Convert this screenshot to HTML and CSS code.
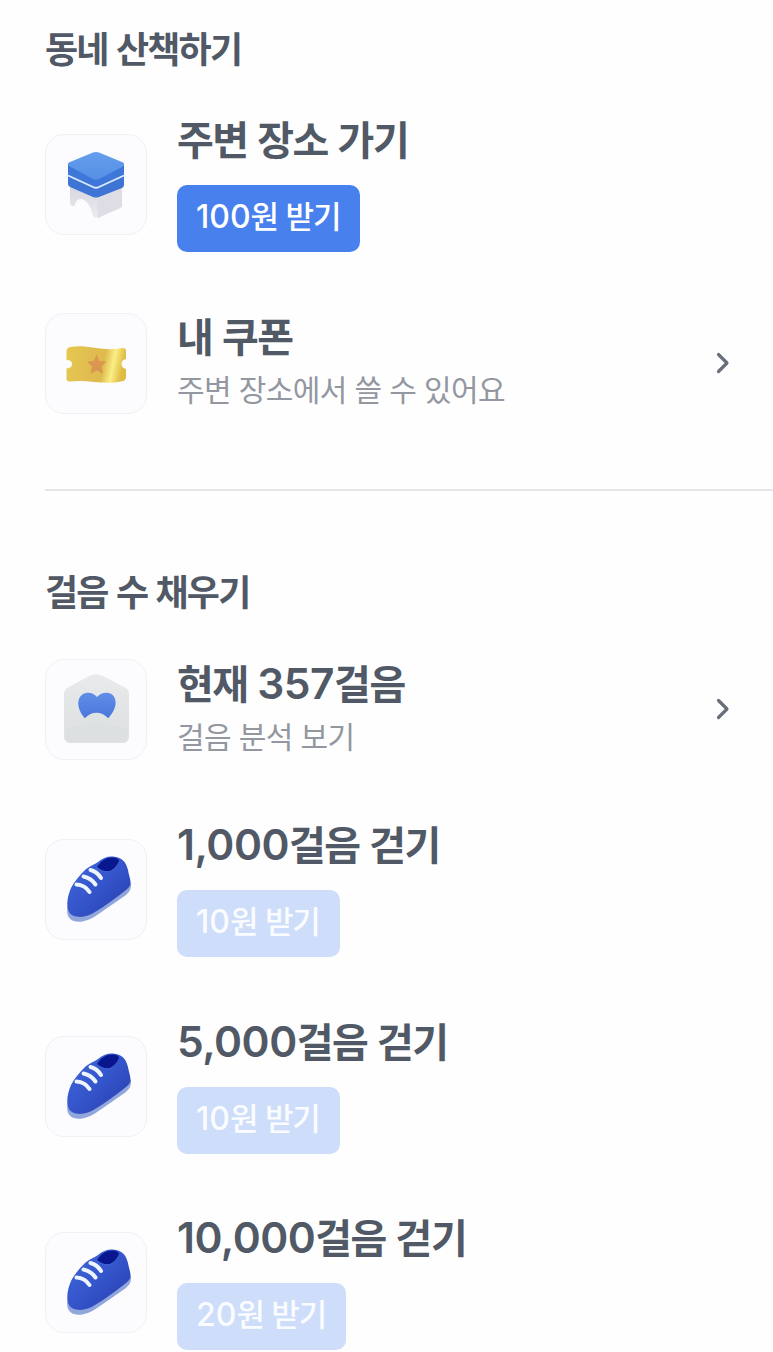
FILE: index.html
```html
<!DOCTYPE html>
<html lang="ko">
<head>
<meta charset="utf-8">
<title>동네 산책하기</title>
<link rel="stylesheet" href="styles.css">
</head>
<body>
<svg class="defs" width="0" height="0" aria-hidden="true">
  <defs>
    <linearGradient id="cushion" x1="0" y1="0" x2="0" y2="1"><stop offset="0" stop-color="#659eeb"/><stop offset="1" stop-color="#5690e6"/></linearGradient>
    <linearGradient id="legs" x1="0" y1="0" x2="0" y2="1"><stop offset="0" stop-color="#d5d4dd"/><stop offset="1" stop-color="#ebebef"/></linearGradient>
    <linearGradient id="gold" x1="0" y1="0" x2="1" y2="0.12"><stop offset="0" stop-color="#e5c84f"/><stop offset=".45" stop-color="#e1bd51"/><stop offset=".67" stop-color="#dfba4c"/><stop offset=".83" stop-color="#faee85"/><stop offset="1" stop-color="#dfbc44"/></linearGradient>
    <linearGradient id="paper" x1="0" y1="0" x2="0" y2="1"><stop offset="0" stop-color="#e8eaeb"/><stop offset="1" stop-color="#dcdfe0"/></linearGradient>
    <linearGradient id="heart" x1="0" y1="0" x2="0" y2="1"><stop offset="0" stop-color="#618ce8"/><stop offset="1" stop-color="#4a79dc"/></linearGradient>
    <linearGradient id="leather" x1="0" y1="0" x2="1" y2="1"><stop offset="0" stop-color="#4169dc"/><stop offset=".5" stop-color="#3555cb"/><stop offset="1" stop-color="#263ba9"/></linearGradient>
    <symbol id="shoe" viewBox="0 0 120 120">
      <path d="M31.500 76C30 86 33 91 42 91.800C50 92 57 88 64 83L90 65Q96 60 95 53Z" fill="#91a7dc"/>
      <path d="M48 41C53 36 58 35 62 32C66 28 72 26 77 26.500C86 27 90 32 92 40C93 46 95 50 94.500 54Q94 57 90 60C80 68 69 76 59 82C51 88 37 89 33 82C29.500 75 32 65 35 58C38 52 43 46 48 41Z" fill="url(#leather)"/>
      <path d="M61 37C64 32 69 27.500 76 27.500Q83 27.500 83.500 32C82 35 79 38 75 41Q69 43 61 37Z" fill="#08178d"/>
      <path d="M60 37.500Q67 43 74 41.500C79 39 82 35 83.500 31" fill="none" stroke="#4164d5" stroke-width="1"/>
      <g fill="none" stroke="#edf5ff" stroke-width="4" stroke-linecap="round"><path d="M54.500 40Q61 41.500 65 48"/><path d="M47.500 46.500Q55 48 59.500 54.500"/><path d="M40.500 54.500Q49 55 53.500 62"/></g>
    </symbol>
  </defs>
</svg>
<main class="page">
  <section class="section">
    <h2 class="heading">동네 산책하기</h2>
    <div class="list">
      <article class="row reward">
        <div class="tile"><svg viewBox="0 0 120 120">
          <path d="M34 58H86V80Q86 82 84 83L64 92Q58 94 57 91L54.500 83Q51 75 45 74Q40 74 38.500 81L36 81Q34 80 34 77Z" fill="url(#legs)"/>
          <path d="M61 69L86 60V80Q86 82 84 83L62 93Z" fill="#dedde5"/>
          <path d="M32 46H88V60Q88 62 86 63L63 72Q60 73 57 72L34 62Q32 61 32 59Z" fill="#3e75d5"/>
          <path d="M32 40Q32 38 34 37H86Q88 38 88 41V48Q88 50 86 51L63 61Q60 62 57 61L34 52Q32 51 32 48Z" fill="#3e77da"/>
          <path d="M32 50.500L57 62Q60 63.500 63 62L88 50.500" fill="none" stroke="#deedff" stroke-width="1.800"/>
          <path d="M33 41Q31 38 34 37L57 27.500Q60 26.500 63 27.500L86 37Q90 39 86 42L64 53.500Q60 55.500 56 53.500Z" fill="url(#cushion)"/>
        </svg></div>
        <div class="copy"><h3 class="title">주변 장소 가기</h3><button class="button"><span class="num">100</span>원 받기</button></div>
      </article>
      <article class="row link">
        <div class="tile"><svg viewBox="0 0 120 120">
          <path d="M30.500 47Q30.500 44 34 43C53 40 66 48 86 44Q90 43.500 90 47V55Q85.500 56 85.500 60Q85.500 64 90 65V73Q90 76 87 77C69 82 53 75 34 77.500Q30.500 77.500 30.500 75V64.500Q36 64 36 60Q36 56 30.500 56Z" fill="url(#gold)"/>
          <path d="M60.500 51.500L63 57.500L69.500 58L64.800 62.500L66.500 69L61 66L55 69L56.500 62.500L52 58L58.200 57.500Z" fill="#db9651" stroke="#db9651" stroke-width="1" stroke-linejoin="round"/>
        </svg></div>
        <div class="copy"><h3 class="title">내 쿠폰</h3><p class="sub">주변 장소에서 쓸 수 있어요</p></div>
        <svg class="chevron" viewBox="0 0 16 24"><path d="M3.500 3.500L12 12L3.500 20.500"/></svg>
      </article>
    </div>
  </section>
  <section class="section divided">
    <h2 class="heading">걸음 수 채우기</h2>
    <div class="list">
      <article class="row link">
        <div class="tile"><svg viewBox="0 0 120 120">
          <path d="M28 43Q28 40 31 38L54 25.500Q60 22.500 66 25.500L90 38Q93 40 93 43V85Q93 93 86 93H35Q28 93 28 85Z" fill="url(#paper)"/>
          <path d="M49 68.500C43 62 41 54 43 49C46 41 56 41 61 47C66 41 77 41 79 49C81 55 78 62 72 68.500Z" fill="url(#heart)"/>
          <path d="M28 79L49 68C56 61 65 61 72 68L93 79V85Q93 93 86 93H35Q28 93 28 85Z" fill="#e0e3e4"/>
          <path d="M29 79L60 70L92 79V86Q92 92 86 92H35Q29 92 29 86Z" fill="#d9dcdd" opacity=".4"/>
        </svg></div>
        <div class="copy"><h3 class="title">현재 <span class="num">357</span>걸음</h3><p class="sub">걸음 분석 보기</p></div>
        <svg class="chevron" viewBox="0 0 16 24"><path d="M3.500 3.500L12 12L3.500 20.500"/></svg>
      </article>
      <article class="row reward">
        <div class="tile"><svg><use href="#shoe"/></svg></div>
        <div class="copy"><h3 class="title"><span class="num">1,000</span>걸음 걷기</h3><button class="button" disabled><span class="num">10</span>원 받기</button></div>
      </article>
      <article class="row reward">
        <div class="tile"><svg><use href="#shoe"/></svg></div>
        <div class="copy"><h3 class="title"><span class="num">5,000</span>걸음 걷기</h3><button class="button" disabled><span class="num">10</span>원 받기</button></div>
      </article>
      <article class="row reward">
        <div class="tile"><svg><use href="#shoe"/></svg></div>
        <div class="copy"><h3 class="title"><span class="num">10,000</span>걸음 걷기</h3><button class="button" disabled><span class="num">20</span>원 받기</button></div>
      </article>
    </div>
  </section>
</main>
</body>
</html>
```
FILE: styles.css
```css
* { box-sizing: border-box; }
body { margin: 0; background: #fefefe; color: #505965; font-family: "Noto Sans CJK KR", sans-serif; overflow: hidden; }
h2, h3, p { margin: 0; font-size: inherit; }
.defs { display: block; }
.page { padding-left: 45px; }
.section { padding-top: 24px; }
.divided { margin-top: 75px; border-top: 2px solid #e5e6e8; padding-top: 76px; }
.heading { height: 50px; line-height: 46px; font-size: 36px; font-weight: 700; letter-spacing: -1.8px; white-space: nowrap; }
.list { display: flex; flex-direction: column; gap: 60px; padding-top: 43px; }
.divided .list { gap: 61.500px; padding-top: 41.500px; }
.row { display: flex; align-items: center; padding-right: 42px; }
.tile { flex: none; width: 102px; height: 101px; border: 1.500px solid #f1f1f5; border-radius: 19px; background: #fcfcff; display: grid; place-items: center; }
.tile svg { width: 120px; height: 120px; margin: -10px; }
.copy { flex: 1; margin-left: 30px; }
.title { height: 51px; line-height: 46px; font-size: 40px; font-weight: 700; letter-spacing: -1.5px; white-space: nowrap; }
.reward .title { height: 46px; line-height: 42px; margin-bottom: 22px; }
.num { font-family: Inter, sans-serif; font-weight: 600; }
.title .num { font-size: 42.500px; letter-spacing: -0.5px; }
.sub { height: 51px; line-height: 51px; font-size: 30px; letter-spacing: -0.620px; color: #9297a0; white-space: nowrap; }
.button { display: block; height: 67px; border: 0; border-radius: 10px; padding: 0 20px 6px 19px; background: #4880ee; color: #fff; font-family: "Noto Sans CJK KR", sans-serif; font-size: 31px; font-weight: 500; line-height: 59px; letter-spacing: -1.1px; white-space: nowrap; }
.button .num { font-weight: 500; font-size: 32px; letter-spacing: 0; }
.button:disabled { background: #cdddfa; color: #fafcff; }
.chevron { width: 16px; height: 24px; margin-bottom: 1px; fill: none; stroke: #686f7a; stroke-width: 3.200; stroke-linecap: round; stroke-linejoin: round; }
```
